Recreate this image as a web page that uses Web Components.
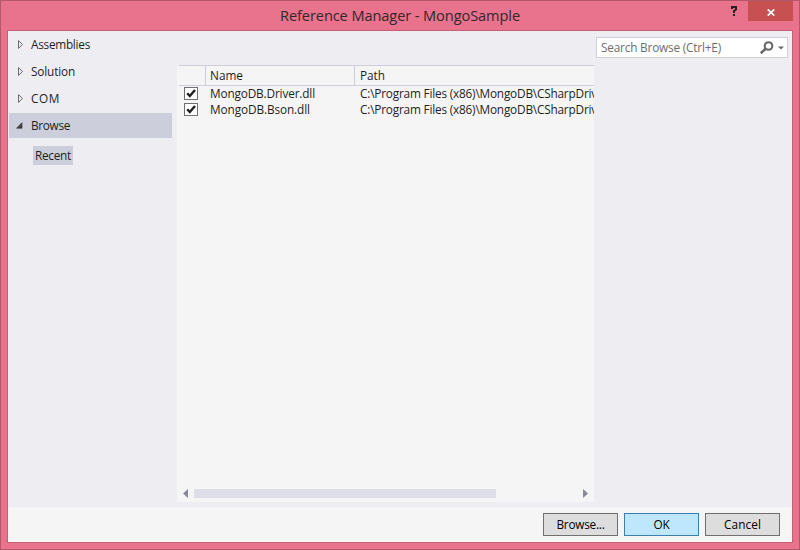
<!DOCTYPE html>
<html lang="en"><head><meta charset="utf-8"><title>Reference Manager - MongoSample</title>
<style>html,body{margin:0;width:800px;height:550px;overflow:hidden}</style></head>
<body>
<reference-manager></reference-manager>
<script>
const define = (name, html, setup) => {
  const t = document.createElement('template');
  t.innerHTML = html;
  customElements.define(name, class extends HTMLElement {
    constructor(){ super(); this.attachShadow({mode:'open'}).append(t.content.cloneNode(true)); }
    connectedCallback(){ if (setup) setup(this, this.shadowRoot); }
  });
};

// A single line of text whose tracking is adjusted to an advance width.
define('text-run', `<style>:host{display:block;white-space:pre;flex:none}span{display:inline-block}</style><span><slot></slot></span>`, (el, root) => {
  const s = root.querySelector('span'), w = +el.getAttribute('w');
  el.style.width = w + 'px';
  const natural = s.getBoundingClientRect().width;
  s.style.letterSpacing = ((w - natural) / el.textContent.length) + 'px';
});

define('title-bar', `<style>
:host{display:flex;height:29px;flex:none;position:relative;justify-content:center;color:#32272b}
text-run{font-size:14.6px;line-height:20px;margin-top:4px}
.tools{position:absolute;right:6px;top:0;display:flex}
.help{width:28px;height:20px;display:block}
.close{width:45px;height:20px;background:#c75050;display:flex;align-items:center;justify-content:center}
svg{display:block}
.close svg{margin-top:2px}
</style><text-run w="240">Reference Manager - MongoSample</text-run>
<div class="tools"><svg class="help" viewBox="0 0 28 20"><path d="M12 8V6H16V8.5L14 10V12M13 14H15" fill="none" stroke="#29201f" stroke-width="2"/></svg>
<div class="close"><svg width="8" height="7" viewBox="0 0 8 7"><path d="M.7 .4 7.3 6.6M7.3 .4 .7 6.6" stroke="#fff" stroke-width="1.7"/></svg></div></div>`);

define('tree-item', `<style>
:host{display:flex;height:25px;margin:0 0 2px 1px;width:163px;align-items:center;box-sizing:border-box;padding-left:7px}
:host([open]){background:#cccedb}
svg{width:15px;height:12px;flex:none;display:block}
:host([open]) .shut,:host(:not([open])) .down{display:none}
</style><svg class="shut" viewBox="0 0 15 12"><path d="M2.5 1.6V9.4L6.5 5.5Z" fill="none" stroke="#6c6c6c"/></svg>
<svg class="down" viewBox="0 0 15 12"><path d="M.5 8.2H6V2.7Z" fill="#424242" stroke="#303030" stroke-width=".6"/></svg><slot></slot>`);

define('check-box', `<style>:host{display:block;width:14px;height:13px;flex:none}svg{display:block}</style>
<svg width="14" height="13" viewBox="0 0 14 13"><rect x=".5" y=".5" width="13" height="12" fill="#fff" stroke="#707070"/><path d="M3.2 6.2 5.8 9 11 3" fill="none" stroke="#1e1e1e" stroke-width="2.3"/></svg>`);

define('list-row', `<style>
:host{display:flex;height:16px;line-height:16px;padding-left:7px;align-items:center}
.name{width:150px;margin-left:11px;padding-left:1px;box-sizing:border-box;flex:none}
.path{padding-left:1px;flex:none}
</style><check-box></check-box><div class="name"><slot name="name"></slot></div><div class="path"><slot name="path"></slot></div>`);

define('scroll-bar', `<style>
:host{display:flex;height:9px;align-items:center;padding:0 6px;justify-content:space-between}
svg{display:block;width:5px;height:9px}
.track{flex:1;margin:0 5px 0 6px;height:9px}.thumb{width:302px;height:9px;background:#dedee8}
</style><svg viewBox="0 0 5 9"><path d="M5 0V9L0 4.5Z" fill="#868999"/></svg><div class="track"><div class="thumb"></div></div><svg viewBox="0 0 5 9"><path d="M0 0V9L5 4.5Z" fill="#868999"/></svg>`);

define('file-list', `<style>
:host{display:flex;flex-direction:column;width:417px;height:437px;background:#f5f5f5;overflow:hidden}
.head{display:flex;height:19px;margin-left:2px;border:solid #cccedb;border-width:1px 0;flex:none;line-height:19px}
.head div{box-sizing:border-box;border-right:1px solid #cccedb;padding-left:4px}
.rows{flex:1;overflow:hidden;margin-top:-1px}
scroll-bar{margin-bottom:4px}
</style><div class="head"><div style="width:27px"></div><div style="width:149px"><text-run w="33">Name</text-run></div><div style="border:0;padding-left:5px"><text-run w="25">Path</text-run></div></div>
<div class="rows">
<list-row><text-run slot="name" w="105">MongoDB.Driver.dll</text-run><text-run slot="path" w="237">C:\\Program Files (x86)\\MongoDB\\CSharpDriv</text-run></list-row>
<list-row><text-run slot="name" w="100">MongoDB.Bson.dll</text-run><text-run slot="path" w="237">C:\\Program Files (x86)\\MongoDB\\CSharpDriv</text-run></list-row>
</div><scroll-bar></scroll-bar>`);

define('search-box', `<style>
:host{display:flex;box-sizing:border-box;width:192px;height:21px;background:#fff;border:1px solid #cccedb;align-items:center;padding-left:4px;color:#6d6d6d;line-height:18px}
svg{width:30px;height:16px;margin-left:auto}
text-run{margin-top:-1px}
</style><text-run w="120">Search Browse (Ctrl+E)</text-run>
<svg viewBox="0 0 30 16"><circle cx="11.5" cy="6" r="3.8" fill="none" stroke="#686868" stroke-width="2.1"/><path d="M8.6 8.8 3.8 13.2" stroke="#686868" stroke-width="2.6"/><path d="M21 6.5H27L24 9.5Z" fill="#686868"/></svg>`);

define('push-button', `<style>
:host{display:flex;box-sizing:border-box;width:75px;height:23px;border:1px solid #707070;background:#ddd;align-items:center;justify-content:center;color:#000}
:host([primary]){background:#bee6fd;border-color:#3c7fb1}
</style><slot></slot>`);

define('reference-manager', `<style>
:host{display:flex;flex-direction:column;box-sizing:border-box;width:800px;height:550px;border:1px solid #b3576b;background:#e9728c;font:11.8px/17px "Open Sans","Noto Sans",sans-serif;color:#1e1e1e}
.client{display:flex;flex-direction:column;box-sizing:border-box;width:786px;height:513px;margin-left:6px;border:1px solid #c15f75;background:#f5f5f5}
.main{display:flex;height:476px;background:#eeeef2;flex:none}
nav{width:169px;padding-top:1px}
.recent{display:flex;background:#cccedb;width:38px;height:19px;margin:8px 0 0 25px;padding-left:2px;align-items:center}
file-list{margin-top:34px}
search-box{margin:6px 0 0 2px}
footer{display:flex;justify-content:flex-end;gap:6px;padding:6px 12px 0 0}
</style><title-bar></title-bar><div class="client"><div class="main">
<nav><tree-item><text-run w="59">Assemblies</text-run></tree-item><tree-item><text-run w="44">Solution</text-run></tree-item><tree-item><text-run w="29">COM</text-run></tree-item><tree-item open><text-run w="39">Browse</text-run></tree-item><div class="recent"><text-run w="36">Recent</text-run></div></nav>
<file-list></file-list><search-box></search-box></div>
<footer><push-button><text-run w="48">Browse...</text-run></push-button><push-button primary><text-run w="16">OK</text-run></push-button><push-button><text-run w="37">Cancel</text-run></push-button></footer></div>`);
</script></body></html>
